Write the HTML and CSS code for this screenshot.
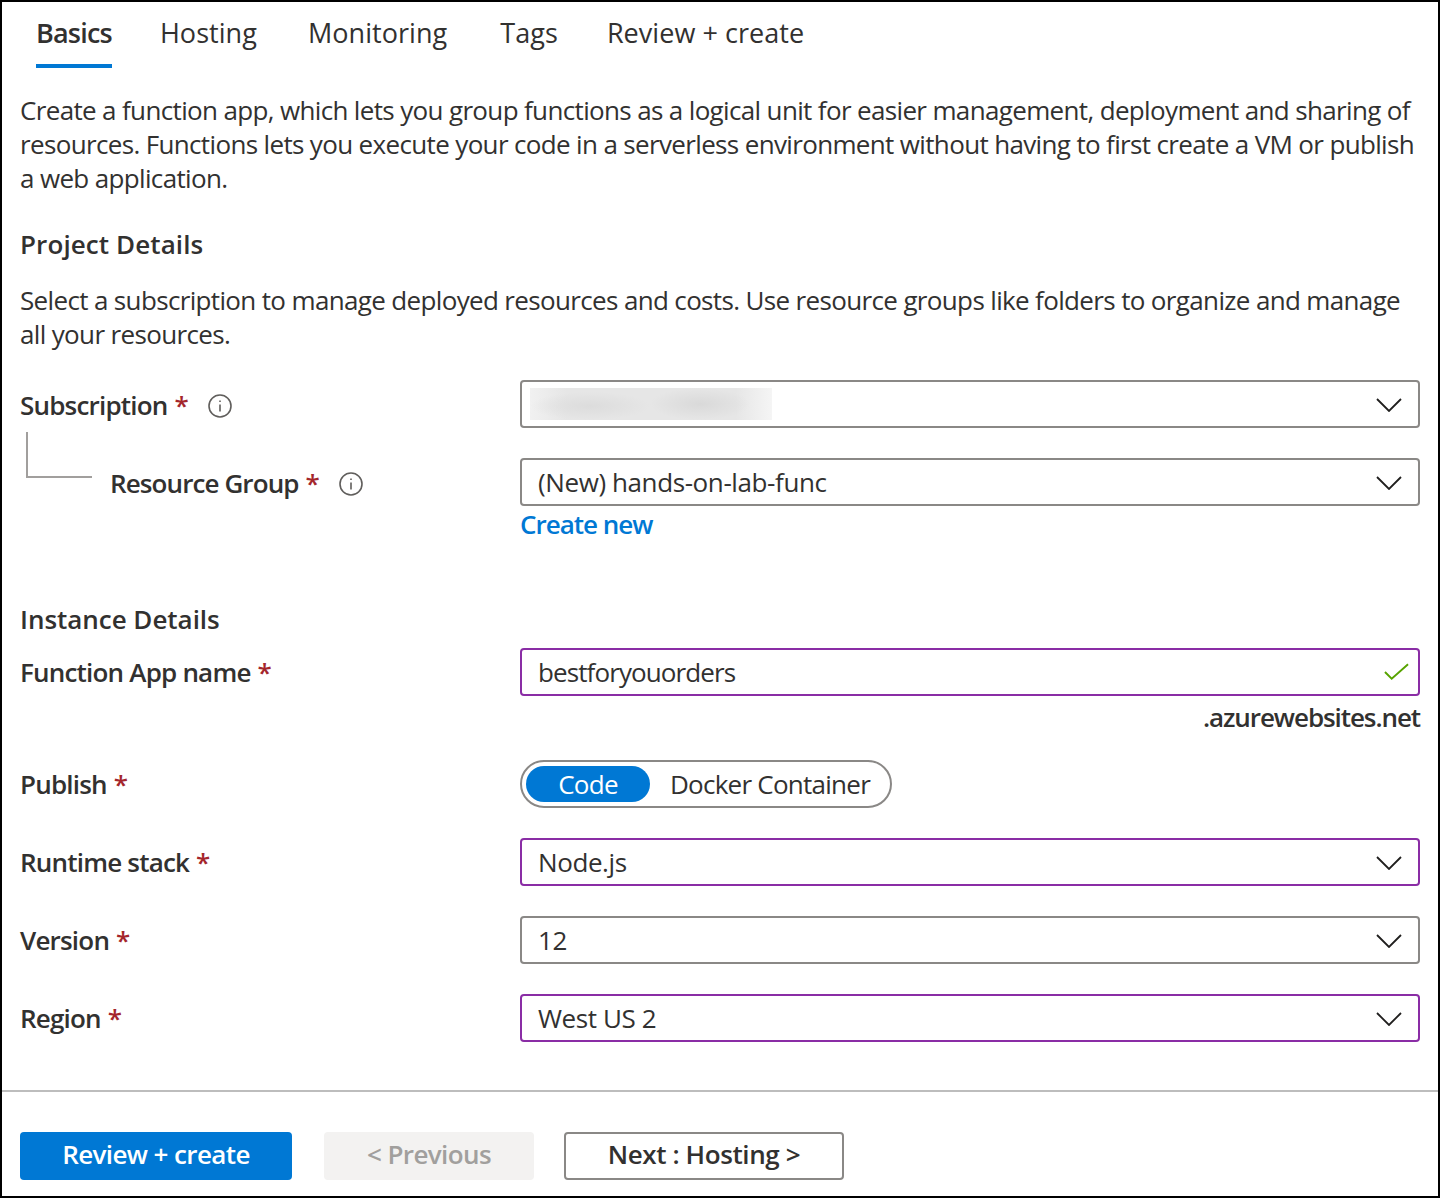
FILE: index.html
```html
<!DOCTYPE html>
<html lang="en">
<head>
  <meta charset="UTF-8">
  <title>Create Function App</title>
  <link rel="stylesheet" href="styles.css">
</head>
<body>
  <div class="page">
    <nav class="tabs">
      <a class="tab active">Basics</a>
      <a class="tab">Hosting</a>
      <a class="tab">Monitoring</a>
      <a class="tab">Tags</a>
      <a class="tab">Review + create</a>
    </nav>

    <div class="content">
      <p class="intro">Create a function app, which lets you group functions as a logical unit for easier management, deployment and sharing of resources. Functions lets you execute your code in a serverless environment without having to first create a VM or publish a web application.</p>

      <h2 class="section project">Project Details</h2>
      <p class="sub-intro">Select a subscription to manage deployed resources and costs. Use resource groups like folders to organize and manage all your resources.</p>

      <div class="row first">
        <div class="label raised">Subscription <span class="req">*</span>
          <svg class="info" viewBox="0 0 24 24"><circle cx="12" cy="12" r="11" /><path d="M12 10.5v7M12 6.5v1.6" /></svg>
        </div>
        <div class="select">
          <span class="blur"></span>
          <svg class="chev" viewBox="0 0 26 14"><path d="M1 1l12 12L25 1" /></svg>
        </div>
      </div>

      <div class="row">
        <div class="label raised nested">
          <span class="tree"></span>
          <span>Resource Group <span class="req">*</span></span>
          <svg class="info" viewBox="0 0 24 24"><circle cx="12" cy="12" r="11" /><path d="M12 10.5v7M12 6.5v1.6" /></svg>
        </div>
        <div class="select">(New) hands-on-lab-func
          <svg class="chev" viewBox="0 0 26 14"><path d="M1 1l12 12L25 1" /></svg>
        </div>
      </div>
      <a class="create-new">Create new</a>

      <h2 class="section instance">Instance Details</h2>

      <div class="row tight">
        <div class="label">Function App name <span class="req">*</span></div>
        <div class="select valid name">bestforyouorders
          <svg class="check" viewBox="0 0 26 18"><path d="M1 9l7 7L25 1" /></svg>
        </div>
      </div>
      <div class="suffix">.azurewebsites.net</div>

      <div class="row publish">
        <div class="label">Publish <span class="req">*</span></div>
        <div class="toggle">
          <span class="opt on">Code</span>
          <span class="opt">Docker Container</span>
        </div>
      </div>

      <div class="row">
        <div class="label">Runtime stack <span class="req">*</span></div>
        <div class="select valid">Node.js
          <svg class="chev" viewBox="0 0 26 14"><path d="M1 1l12 12L25 1" /></svg>
        </div>
      </div>

      <div class="row">
        <div class="label">Version <span class="req">*</span></div>
        <div class="select">12
          <svg class="chev" viewBox="0 0 26 14"><path d="M1 1l12 12L25 1" /></svg>
        </div>
      </div>

      <div class="row">
        <div class="label">Region <span class="req">*</span></div>
        <div class="select valid">West US 2
          <svg class="chev" viewBox="0 0 26 14"><path d="M1 1l12 12L25 1" /></svg>
        </div>
      </div>
    </div>

    <footer class="actions">
      <button class="btn primary">Review + create</button>
      <button class="btn disabled">&lt; Previous</button>
      <button class="btn outline">Next : Hosting &gt;</button>
    </footer>
  </div>
</body>
</html>
```

FILE: styles.css
```css
* {
  margin: 0;
  padding: 0;
  box-sizing: border-box;
}

body {
  font-family: "Open Sans", "Noto Sans", sans-serif;
  font-size: 26px;
  line-height: 34px;
  letter-spacing: -0.65px;
  color: #323130;
  background: #fff;
}

.page {
  width: 1440px;
  height: 1198px;
  border: 2px solid #000;
  overflow: hidden;
}

.tabs {
  display: flex;
  height: 66px;
  padding-left: 34px;
}

.tab {
  height: 66px;
  margin-left: 50px;
  padding-top: 14px;
  font-size: 27px;
  letter-spacing: 0.05px;
}

.tab:nth-child(2) {
  margin-left: 48px;
}

.tab:nth-child(3) {
  margin-left: 51px;
}

.tab:nth-child(4) {
  margin-left: 53px;
}

.tab:nth-child(5) {
  margin-left: 49px;
}

.tab.active {
  margin-left: 0;
  font-weight: 600;
  letter-spacing: -0.8px;
  border-bottom: 4px solid #0078d4;
}

.content {
  padding: 0 18px;
}

.intro {
  margin-top: 25px;
}

.section {
  font-size: 26px;
  font-weight: 600;
  letter-spacing: 0.1px;
}

.section.project {
  margin-top: 32px;
}

.section.instance {
  margin-top: 61px;
  letter-spacing: -0.03px;
}

.sub-intro {
  margin-top: 22px;
}

.row {
  display: flex;
  align-items: center;
  margin-top: 30px;
}

.row.first {
  margin-top: 29px;
}

.row.tight {
  margin-top: 12px;
}

.row.publish {
  margin-top: 26px;
}

.label {
  display: flex;
  align-items: center;
  width: 500px;
  height: 48px;
  font-weight: 600;
  letter-spacing: -0.8px;
  white-space: pre;
}

.label.raised {
  padding-top: 2px;
}

.label.nested {
  padding-left: 6px;
  letter-spacing: -0.9px;
}

.tree {
  flex: none;
  align-self: flex-start;
  width: 66px;
  height: 46px;
  margin: -28px 18px 0 0;
  border-left: 2px solid #a19f9d;
  border-bottom: 2px solid #a19f9d;
}

.req {
  margin-left: 1px;
  color: #a4262c;
}

.info {
  width: 24px;
  height: 24px;
  margin: 2px 0 0 20px;
  fill: none;
  stroke: #605e5c;
  stroke-width: 1.6;
}

.select {
  position: relative;
  display: flex;
  align-items: center;
  width: 900px;
  height: 48px;
  padding-left: 16px;
  border: 2px solid #8a8886;
  border-radius: 4px;
  letter-spacing: -0.4px;
}

.select.valid {
  border-color: #8a2da5;
}

.select.name {
  letter-spacing: -0.9px;
}

.blur {
  width: 242px;
  height: 32px;
  margin-left: -8px;
  background:
    radial-gradient(ellipse 50px 16px at 170px 16px, #d9d9d9, transparent),
    radial-gradient(ellipse 60px 14px at 60px 18px, #dcdcdc, transparent),
    linear-gradient(90deg, #f1f1f1 0%, #e6e6e6 15%, #e6e6e6 85%, #f5f5f5 100%);
}

.chev,
.check {
  position: absolute;
  fill: none;
}

.chev {
  right: 16px;
  top: 16px;
  width: 26px;
  height: 14px;
  stroke: #201f1e;
  stroke-width: 1.8;
}

.check {
  right: 9px;
  top: 13px;
  width: 25px;
  height: 18px;
  stroke: #57a300;
  stroke-width: 2;
}

.create-new {
  display: block;
  margin: 1px 0 0 500px;
  font-weight: 600;
  letter-spacing: -1px;
  color: #0078d4;
}

.suffix {
  margin-top: 4px;
  font-weight: 600;
  letter-spacing: -1.08px;
  text-align: right;
}

.toggle {
  display: flex;
  align-items: center;
  width: 372px;
  height: 48px;
  padding-left: 4px;
  border: 2px solid #8a8886;
  border-radius: 24px;
  letter-spacing: -0.75px;
}

.opt {
  padding-left: 20px;
}

.opt.on {
  width: 124px;
  height: 36px;
  padding-left: 0;
  line-height: 36px;
  text-align: center;
  color: #fff;
  background: #0078d4;
  border-radius: 18px;
}

.actions {
  display: flex;
  height: 106px;
  margin-top: 48px;
  padding: 40px 0 0 18px;
  border-top: 2px solid #bdbdbd;
}

.btn {
  height: 48px;
  padding-bottom: 4px;
  font-family: inherit;
  font-size: 26px;
  font-weight: 600;
  letter-spacing: -0.6px;
  border-radius: 4px;
  border: 2px solid transparent;
}

.btn.primary {
  width: 272px;
  color: #fff;
  background: #0078d4;
}

.btn.disabled {
  width: 210px;
  margin-left: 32px;
  color: #a19f9d;
  background: #f3f2f1;
}

.btn.outline {
  width: 280px;
  margin-left: 30px;
  letter-spacing: -0.4px;
  color: #323130;
  background: #fff;
  border-color: #8a8886;
}
```
